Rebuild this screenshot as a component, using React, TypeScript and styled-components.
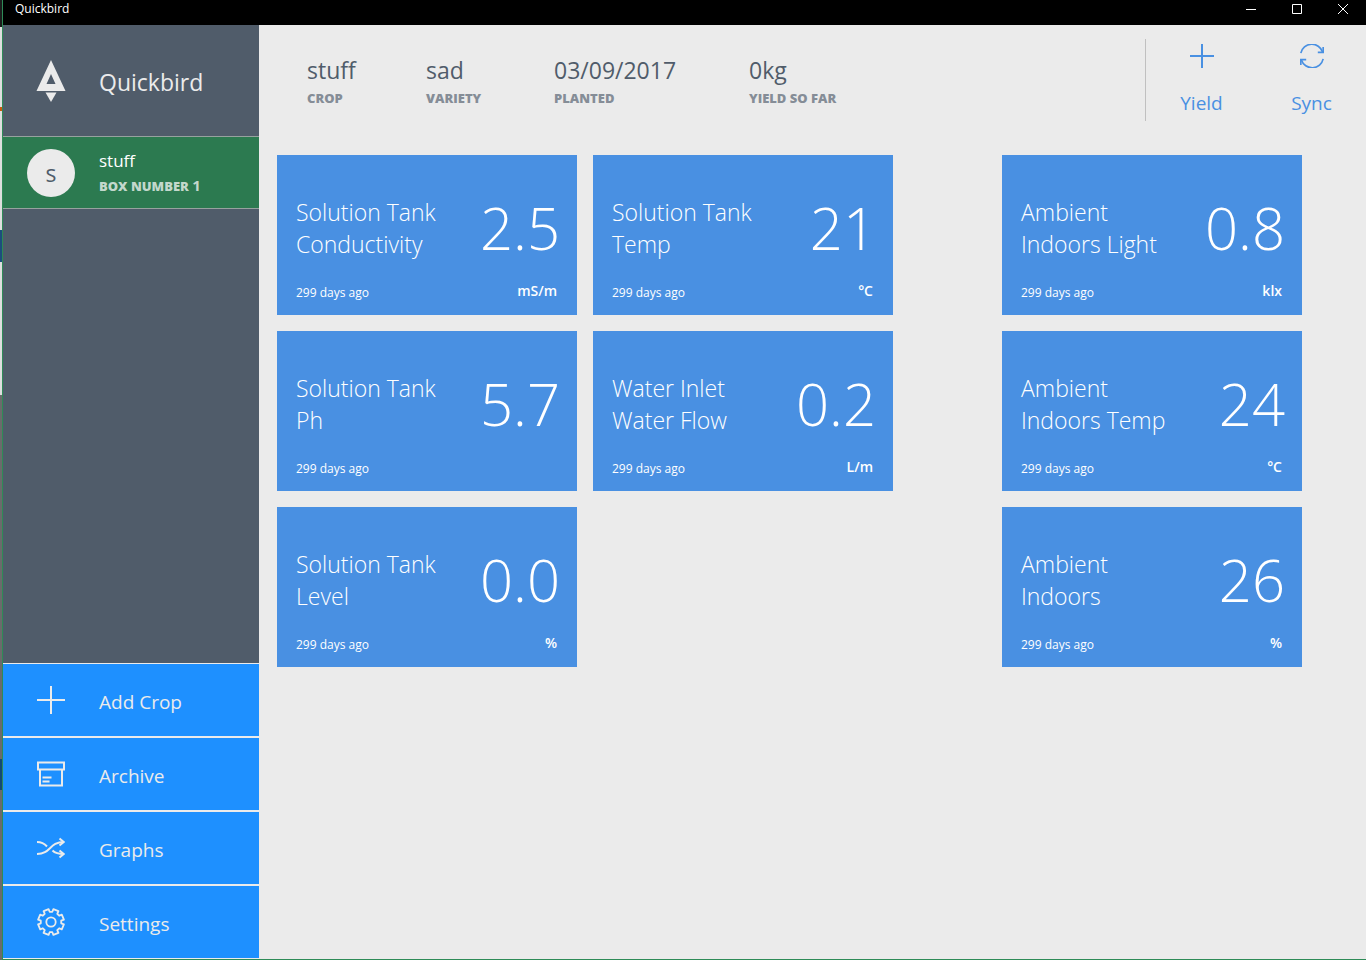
import React from 'react';
import styled, { createGlobalStyle } from 'styled-components';

const slate = '#505c6a';
const paper = '#ebebeb';
const blue = '#4990e2';
const navBlue = '#1e90ff';

const GlobalStyle = createGlobalStyle`
  * { box-sizing: border-box; }
  body { margin: 0; background: ${paper}; }
  body, button { font-family: "Open Sans", "Noto Sans", sans-serif; }
  button { border: 0; padding: 0; background: none; color: inherit; cursor: pointer; }
  h1, h2, p, dl, dt, dd, ul { margin: 0; padding: 0; }
`;

const Desktop = styled.div`
  display: flex;
  min-height: 100vh;
  padding-left: 2px;
  background: linear-gradient(
    #1c1c1c 27px, #dedede 27px, #dedede 107px, #c8580c 107px, #c8580c 111px,
    #dedede 111px, #dedede 230px, #1d4e7c 230px, #1d4e7c 262px,
    #dedede 262px, #dedede 395px, #6b6b6b 395px, #6b6b6b 759px,
    #134a75 759px, #134a75 790px, #6b6b6b 790px
  );
`;

const AppWindow = styled.div`
  flex: 1;
  min-width: 0;
  display: flex;
  flex-direction: column;
  border-left: 1px solid #2e8b57;
  border-bottom: 1px solid #2e8b57;
`;

const TitleBar = styled.header`
  display: flex;
  align-items: center;
  justify-content: space-between;
  height: 25px;
  padding: 0 0 7px 12px;
  background: #000;
  color: #fff;
  font-size: 12px;
  line-height: 18px;
`;

const WindowControls = styled.div`
  display: flex;
`;

const WindowButton = styled.button`
  display: grid;
  place-items: center;
  width: 46px;
  height: 18px;
`;

const Body = styled.div`
  flex: 1;
  display: flex;
`;

const Sidebar = styled.aside`
  flex: none;
  display: flex;
  flex-direction: column;
  width: 256px;
  background: ${slate};
  color: ${paper};
`;

const Brand = styled.div`
  display: flex;
  align-items: center;
  height: 111px;
`;

const IconSlot = styled.span`
  flex: none;
  display: grid;
  place-items: center;
  width: 96px;
`;

const BrandName = styled.h1`
  padding-top: 2px;
  font-size: 23px;
  font-weight: 400;
  line-height: 32px;
`;

const CropItem = styled.button`
  display: flex;
  align-items: center;
  height: 73px;
  border-top: 1px solid #97a29f;
  border-bottom: 1px solid #97a29f;
  background: #2c7a50;
  color: #fff;
  text-align: left;
`;

const Avatar = styled.span`
  width: 48px;
  height: 48px;
  border-radius: 50%;
  background: ${paper};
  color: ${slate};
  font-size: 23px;
  line-height: 48px;
  text-align: center;
`;

const CropText = styled.span`
  display: flex;
  flex-direction: column;
  padding-top: 2px;
`;

const CropName = styled.span`
  font-size: 17px;
  line-height: 24px;
`;

const BoxLabel = styled.span`
  color: #c3d8cc;
  font-size: 13px;
  font-weight: 800;
  line-height: 24px;
`;

const BoxNumber = styled.span`
  font-size: 15px;
  font-weight: 700;
`;

const Nav = styled.nav`
  display: flex;
  flex-direction: column;
  margin-top: auto;
`;

const NavButton = styled.button`
  display: flex;
  align-items: center;
  height: 74px;
  border-top: 1px solid ${paper};
  border-bottom: 1px solid ${paper};
  background: ${navBlue};
  font-size: 19px;
  line-height: 28px;
  text-align: left;
`;

const NavLabel = styled.span`
  padding-top: 4px;
`;

const Main = styled.main`
  flex: 1;
  min-width: 0;
  background: ${paper};
`;

const TopBar = styled.div`
  display: flex;
  justify-content: space-between;
  padding: 14px 0 34px 48px;
`;

const Stats = styled.dl`
  display: grid;
  grid-template-columns: 119px 128px 195px auto;
  padding-top: 15px;
`;

const Stat = styled.div`
  display: flex;
  flex-direction: column-reverse;
  justify-content: flex-end;
`;

const StatValue = styled.dd`
  color: ${slate};
  font-size: 23px;
  line-height: 32px;
`;

const StatLabel = styled.dt`
  color: #858d97;
  font-size: 13px;
  font-weight: 800;
  line-height: 24px;
`;

const Actions = styled.div`
  display: flex;
  height: 82px;
  border-left: 1px solid #c0c0c0;
  color: ${blue};
`;

const ActionButton = styled.button`
  display: flex;
  flex-direction: column;
  align-items: center;
  gap: 21px;
  width: 110px;
  padding: 5px 0 0 1px;
  font-size: 19px;
  line-height: 28px;
`;

const Boards = styled.div`
  display: flex;
  justify-content: space-between;
  gap: 16px;
  padding: 0 64px 32px 18px;
`;

const CardGrid = styled.section<{ $columns: number }>`
  display: grid;
  grid-template-columns: repeat(${(p) => p.$columns}, 300px);
  gap: 16px;
  align-content: start;
`;

const Card = styled.article`
  display: flex;
  flex-direction: column;
  justify-content: flex-end;
  height: 160px;
  padding: 0 17px 10px 19px;
  background: ${blue};
  color: #fff;
`;

const CardRow = styled.div`
  display: flex;
  align-items: center;
  justify-content: space-between;
`;

const CardTitle = styled.h2`
  font-size: 23px;
  font-weight: 300;
  line-height: 32px;
`;

const Reading = styled.p`
  font-size: 58px;
  font-weight: 300;
  line-height: 64px;
`;

const CardFoot = styled.div`
  display: flex;
  align-items: flex-start;
  justify-content: space-between;
  padding: 19px 3px 0 0;
`;

const Age = styled.span`
  padding-top: 2px;
  font-size: 12px;
  line-height: 24px;
`;

const Unit = styled.span`
  font-size: 14px;
  font-weight: 600;
  line-height: 24px;
`;

const Logo = () => (
  <svg width="30" height="44" viewBox="0 0 30 44" aria-hidden="true">
    <path fill={paper} fillRule="evenodd" d="M15 1 29.500 32H.5ZM15 15 10.500 25H19.500Z" />
    <path fill={paper} d="M9.500 33.500h11L15 43Z" />
  </svg>
);

const PlusIcon = ({ size }: { size: number }) => (
  <svg width={size} height={size} viewBox={`0 0 ${size} ${size}`} aria-hidden="true">
    <path d={`M${size / 2} 0v${size}M0 ${size / 2}h${size}`} stroke="currentColor" strokeWidth="2" />
  </svg>
);

const SyncIcon = () => (
  <svg width="24" height="24" viewBox="0 0 24 24" fill="none" stroke="currentColor" strokeWidth="1.700" aria-hidden="true">
    <path d="M.8 9.200A11.300 11.300 0 0 1 22.600 8M23.200 14.800A11.300 11.300 0 0 1 1.400 16" />
    <path d="M23.200 3v5.300h-5.400M.8 21v-5.300h5.400" />
  </svg>
);

const ArchiveIcon = () => (
  <svg width="28" height="28" viewBox="0 0 28 28" fill="none" stroke="currentColor" strokeWidth="2" aria-hidden="true">
    <path d="M1 2.500h26v7H1ZM3 9.500v16h22v-16M5.500 17.500h9M5.500 21.500h7" />
  </svg>
);

const ShuffleIcon = () => (
  <svg width="28" height="28" viewBox="0 0 28 28" fill="none" stroke="currentColor" strokeWidth="2" aria-hidden="true">
    <path d="M0 20C14 20 12 8 27 8M0 8c5 0 7.500 1.700 10 4.500M15.500 16.500C18 19 21 20 27 20" />
    <path d="m22.500 4.500 4.200 3.500-4.200 3.500M22.500 16.500l4.200 3.500-4.200 3.500" />
  </svg>
);

const gearPath = (() => {
  const teeth = 8;
  const points: string[] = [];
  for (let i = 0; i < teeth; i++) {
    const mid = (i + 0.5) * (360 / teeth);
    [[-15, 10.3], [-12, 13.1], [12, 13.1], [15, 10.3]].forEach(([offset, radius]) => {
      const angle = ((mid + offset) * Math.PI) / 180;
      points.push(`${(14 + radius * Math.cos(angle)).toFixed(2)} ${(14 + radius * Math.sin(angle)).toFixed(2)}`);
    });
  }
  return `M${points.join('L')}Z`;
})();

const GearIcon = () => (
  <svg width="28" height="28" viewBox="0 0 28 28" fill="none" stroke="currentColor" strokeWidth="1.800" strokeLinejoin="round" aria-hidden="true">
    <path d={gearPath} />
    <circle cx="14" cy="14" r="4.700" />
  </svg>
);

const navItems = [
  { label: 'Add Crop', icon: <PlusIcon size={28} /> },
  { label: 'Archive', icon: <ArchiveIcon /> },
  { label: 'Graphs', icon: <ShuffleIcon /> },
  { label: 'Settings', icon: <GearIcon /> },
];

const stats = [
  { label: 'CROP', value: 'stuff' },
  { label: 'VARIETY', value: 'sad' },
  { label: 'PLANTED', value: '03/09/2017' },
  { label: 'YIELD SO FAR', value: '0kg' },
];

type Sensor = { title: [string, string]; value: string; unit: string };

const tankSensors: Sensor[] = [
  { title: ['Solution Tank', 'Conductivity'], value: '2.5', unit: 'mS/m' },
  { title: ['Solution Tank', 'Temp'], value: '21', unit: '°C' },
  { title: ['Solution Tank', 'Ph'], value: '5.7', unit: '' },
  { title: ['Water Inlet', 'Water Flow'], value: '0.2', unit: 'L/m' },
  { title: ['Solution Tank', 'Level'], value: '0.0', unit: '%' },
];

const ambientSensors: Sensor[] = [
  { title: ['Ambient', 'Indoors Light'], value: '0.8', unit: 'klx' },
  { title: ['Ambient', 'Indoors Temp'], value: '24', unit: '°C' },
  { title: ['Ambient', 'Indoors'], value: '26', unit: '%' },
];

const SensorCard = ({ title, value, unit }: Sensor) => (
  <Card>
    <CardRow>
      <CardTitle>{title[0]}<br />{title[1]}</CardTitle>
      <Reading>{value}</Reading>
    </CardRow>
    <CardFoot>
      <Age>299 days ago</Age>
      <Unit>{unit}</Unit>
    </CardFoot>
  </Card>
);

export default function App() {
  return (
    <Desktop>
      <GlobalStyle />
      <AppWindow>
        <TitleBar>
          <span>Quickbird</span>
          <WindowControls>
            <WindowButton aria-label="Minimize">
              <svg width="10" height="10"><path d="M0 5.500h10" stroke="#fff" /></svg>
            </WindowButton>
            <WindowButton aria-label="Maximize">
              <svg width="10" height="10"><path d="M.5.5h9v9h-9Z" stroke="#fff" fill="none" /></svg>
            </WindowButton>
            <WindowButton aria-label="Close">
              <svg width="10" height="10"><path d="m0 0 10 10M10 0 0 10" stroke="#fff" /></svg>
            </WindowButton>
          </WindowControls>
        </TitleBar>
        <Body>
          <Sidebar>
            <Brand>
              <IconSlot><Logo /></IconSlot>
              <BrandName>Quickbird</BrandName>
            </Brand>
            <CropItem>
              <IconSlot><Avatar>s</Avatar></IconSlot>
              <CropText>
                <CropName>stuff</CropName>
                <BoxLabel>BOX NUMBER <BoxNumber>1</BoxNumber></BoxLabel>
              </CropText>
            </CropItem>
            <Nav>
              {navItems.map(({ label, icon }) => (
                <NavButton key={label}>
                  <IconSlot>{icon}</IconSlot>
                  <NavLabel>{label}</NavLabel>
                </NavButton>
              ))}
            </Nav>
          </Sidebar>
          <Main>
            <TopBar>
              <Stats>
                {stats.map(({ label, value }) => (
                  <Stat key={label}>
                    <StatLabel>{label}</StatLabel>
                    <StatValue>{value}</StatValue>
                  </Stat>
                ))}
              </Stats>
              <Actions>
                <ActionButton><PlusIcon size={24} />Yield</ActionButton>
                <ActionButton><SyncIcon />Sync</ActionButton>
              </Actions>
            </TopBar>
            <Boards>
              <CardGrid $columns={2}>
                {tankSensors.map((s) => <SensorCard key={s.title.join(' ')} {...s} />)}
              </CardGrid>
              <CardGrid $columns={1}>
                {ambientSensors.map((s) => <SensorCard key={s.title.join(' ')} {...s} />)}
              </CardGrid>
            </Boards>
          </Main>
        </Body>
      </AppWindow>
    </Desktop>
  );
}
